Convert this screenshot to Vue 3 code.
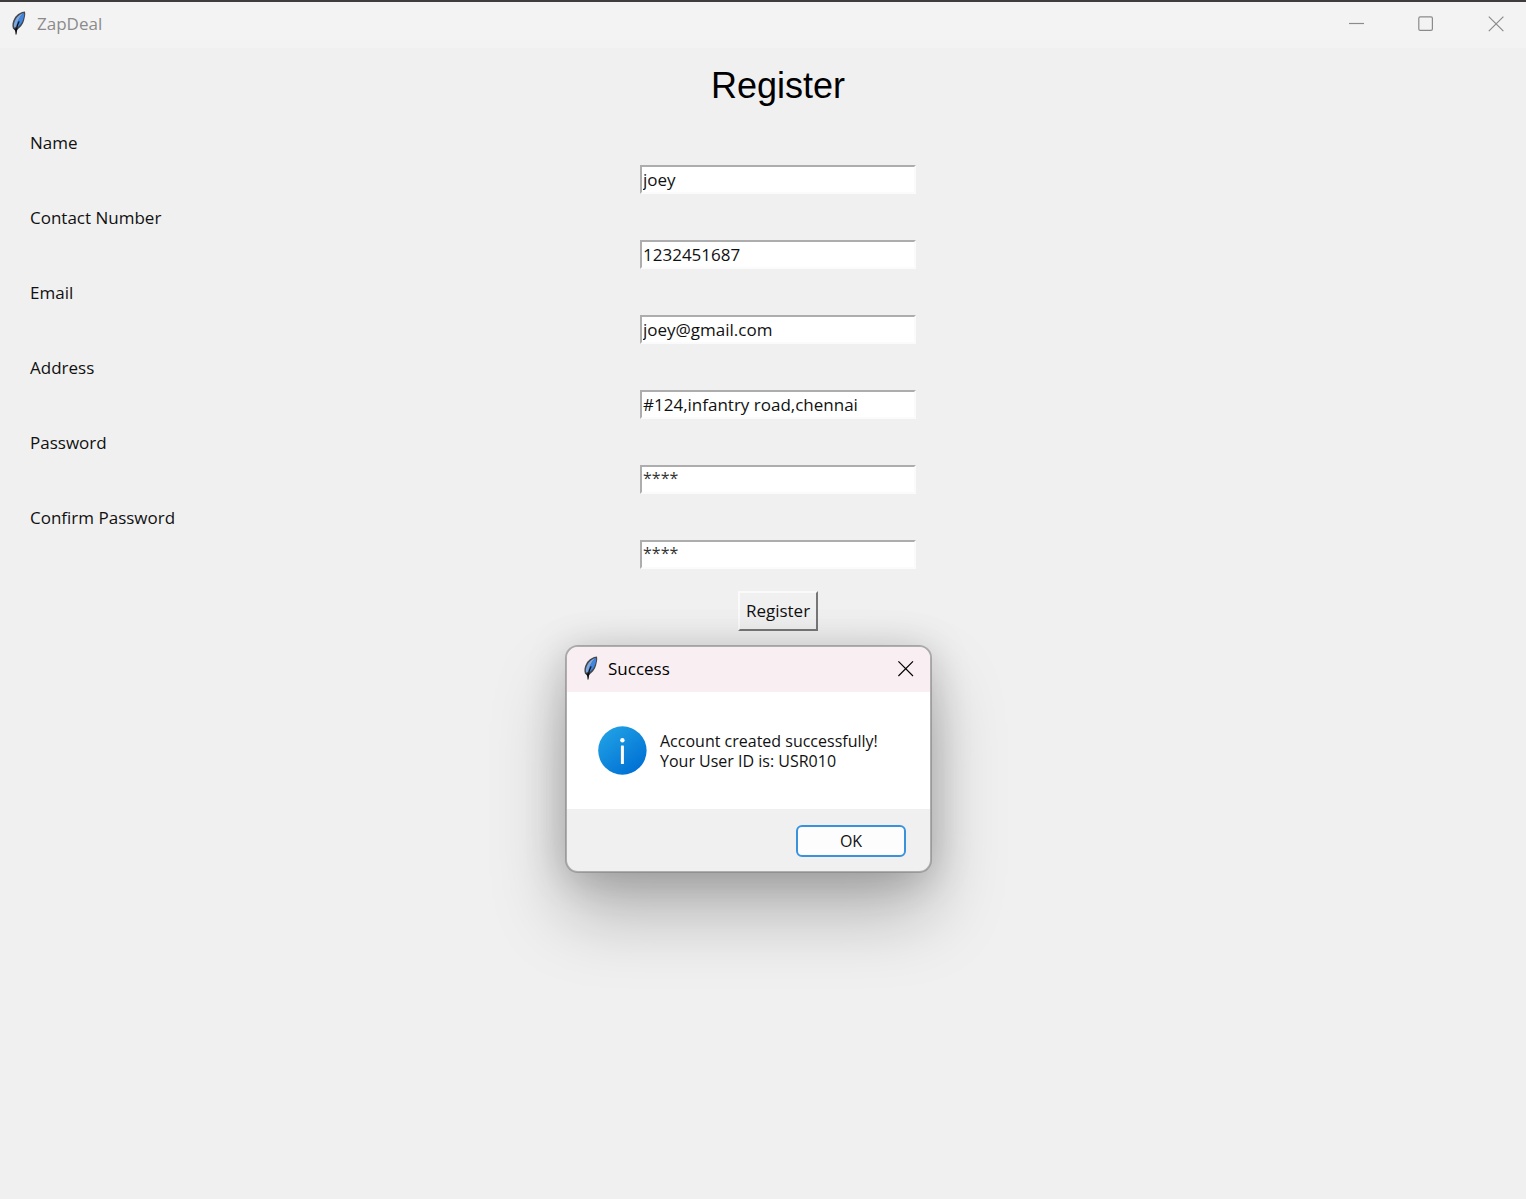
<script setup>
import { reactive, ref } from 'vue'

const fields = reactive([
  { id: 'name', label: 'Name', value: 'joey' },
  { id: 'contact', label: 'Contact Number', value: '1232451687' },
  { id: 'email', label: 'Email', value: 'joey@gmail.com' },
  { id: 'address', label: 'Address', value: '#124,infantry road,chennai' },
  { id: 'password', label: 'Password', value: '****', masked: true },
  { id: 'confirm', label: 'Confirm Password', value: '****', masked: true },
])
const dialogOpen = ref(true)
</script>

<template>
  <div class="window">
    <!-- Feather shared by both title bars -->
    <svg class="defs" width="0" height="0" aria-hidden="true">
      <symbol id="feather" viewBox="0 0 16 24">
        <path d="M15 .6C11 .8 7 3.4 4.6 7C2.4 10.4 1.8 14.4 3 17.8L5.8 19.8C10 17.2 13 13.4 14 9.8C14.6 7 15.8 4 15 .6Z" fill="#44474e" />
        <path d="M13.4 2C10.2 2.8 7.2 5.4 5.6 8.6C4 11.6 3.4 14.4 4.2 16.8L6.4 15.4C7 11 9.4 6.4 13.4 2Z" fill="#7fa9de" />
        <path d="M14 1.8C10.4 4.6 6.8 10.6 6 17.2C9.8 14.8 12.2 12 13 8.8C13.6 6.6 14.6 4.6 14 1.8Z" fill="#3f86e0" />
        <path d="M9.2 10.4C7.4 13.4 6.2 17 6 23.4" fill="none" stroke="#0c0e12" stroke-width="1.1" />
        <path d="M4.2 17.6L6 22.4L7.8 17.4Z" fill="#0c0e12" />
      </symbol>
    </svg>

    <header class="titlebar">
      <svg class="feather" aria-hidden="true"><use href="#feather" /></svg>
      <span class="caption">ZapDeal</span>
      <div class="controls">
        <button type="button" aria-label="Minimize">
          <svg width="16" height="16" viewBox="0 0 16 16"><path d="M1 7.5H16" /></svg>
        </button>
        <button type="button" aria-label="Maximize">
          <svg width="16" height="16" viewBox="0 0 16 16"><rect x=".8" y=".8" width="13.6" height="13.6" rx="1.4" /></svg>
        </button>
        <button type="button" aria-label="Close">
          <svg width="16" height="16" viewBox="0 0 16 16"><path d="M.8 .6L15.4 15.2M15.4 .6L.8 15.2" /></svg>
        </button>
      </div>
    </header>

    <main>
      <form class="form" @submit.prevent="dialogOpen = true">
        <h1>Register</h1>
        <div v-for="field in fields" :key="field.id" class="field">
          <label :for="field.id">{{ field.label }}</label>
          <input
            :id="field.id"
            v-model="field.value"
            :class="{ masked: field.masked }"
            type="text"
            autocomplete="off"
            spellcheck="false"
          />
        </div>
        <button class="submit" type="submit">Register</button>
      </form>
    </main>

    <section v-if="dialogOpen" class="dialog" role="dialog" aria-labelledby="dialog-title">
      <header class="dialog-bar">
        <svg class="feather" aria-hidden="true"><use href="#feather" /></svg>
        <h2 id="dialog-title">Success</h2>
        <button class="dialog-close" type="button" aria-label="Close" @click="dialogOpen = false">
          <svg width="16" height="16" viewBox="0 0 16 16"><path d="M.4 .4L15 15M15 .4L.4 15" /></svg>
        </button>
      </header>
      <div class="dialog-body">
        <svg width="50" height="50" viewBox="0 0 50 50" aria-hidden="true">
          <defs>
            <linearGradient id="info" x1="0.15" y1="0.1" x2="0.8" y2="0.95">
              <stop offset="0" stop-color="#1f9fe4" />
              <stop offset="1" stop-color="#0070d4" />
            </linearGradient>
          </defs>
          <circle cx="25.4" cy="24.5" r="24.2" fill="url(#info)" />
          <circle cx="25.4" cy="14.2" r="2.2" fill="#fff" />
          <rect x="23.9" y="19.4" width="3" height="18.6" rx=".6" fill="#fff" />
        </svg>
        <p>Account created successfully!<br />Your User ID is: USR010</p>
      </div>
      <footer class="dialog-footer">
        <button class="ok" type="button" @click="dialogOpen = false">OK</button>
      </footer>
    </section>
  </div>
</template>

<style>
body {
  background: #f0f0f0;
}
</style>

<style scoped>
.window {
  position: relative;
  box-sizing: border-box;
  min-height: 100vh;
  border-top: 2px solid #3f3c3e;
  background: #f0f0f0;
  color: #111;
  font-family: "Open Sans", "Noto Sans", sans-serif;
  font-size: 17px;
  line-height: 20px;
}

.defs {
  position: absolute;
}

button,
input {
  box-sizing: border-box;
  margin: 0;
  color: inherit;
  font: inherit;
}

.titlebar {
  display: flex;
  align-items: center;
  height: 46px;
  padding-left: 10px;
  background: #f3f3f3;
  color: #8b8b8b;
}

.feather {
  width: 16px;
  height: 24px;
  margin-bottom: 4px;
}

.caption {
  margin-left: 11px;
  padding-bottom: 2px;
}

.controls {
  display: flex;
  align-self: stretch;
  margin-left: auto;
  padding: 0 22px 2px 0;
  gap: 54px;
}

.controls button {
  display: flex;
  align-items: center;
  width: 16px;
  padding: 0;
  border: 0;
  background: none;
}

.controls svg,
.dialog-close svg {
  flex: none;
  fill: none;
  stroke: currentColor;
  stroke-width: 1.2;
}

.form {
  display: flex;
  flex-direction: column;
  align-items: center;
  padding-left: 30px;
}

h1 {
  margin: 0;
  color: #000;
  font-family: "Liberation Sans", Arial, sans-serif;
  font-size: 36px;
  font-weight: 400;
  line-height: 76px;
}

.field {
  display: flex;
  flex-direction: column;
  align-items: center;
  width: 100%;
  height: 75px;
}

.field label {
  align-self: flex-start;
  line-height: 37px;
  margin-bottom: 4px;
}

.field input {
  width: 276px;
  height: 29px;
  padding: 0 1px;
  border: 2px solid #fbfbfb;
  border-top-color: #adadad;
  border-left-color: #adadad;
  border-radius: 0;
  outline: 0;
  background: #fff;
}

.field .masked {
  padding-bottom: 3px;
  color: #333;
  font-size: 16px;
}

.submit {
  width: 80px;
  height: 40px;
  margin-top: 17px;
  padding: 0;
  border: 2px solid #fafafa;
  border-right-color: #777;
  border-bottom-color: #777;
  background: #f0f0f0;
}

.dialog {
  position: absolute;
  top: 643px;
  left: 565px;
  box-sizing: border-box;
  width: 367px;
  border: 2px solid rgba(130, 130, 130, 0.6);
  border-radius: 13px;
  background: #f0f0f0;
  background-clip: padding-box;
  box-shadow: 0 40px 72px rgba(0, 0, 0, 0.26), 0 4px 40px rgba(0, 0, 0, 0.18);
}

.dialog-bar {
  display: flex;
  align-items: center;
  box-sizing: border-box;
  height: 45px;
  padding: 0 16px 2px 15px;
  border-radius: 11px 11px 0 0;
  background: #f9eff3;
  color: #000;
}

.dialog-bar .feather {
  margin-bottom: 2px;
}

h2 {
  margin: 0 auto 0 10px;
  font-size: 17px;
  font-weight: 400;
}

.dialog-close {
  display: flex;
  padding: 0;
  border: 0;
  background: none;
}

.dialog-body {
  display: flex;
  align-items: center;
  gap: 13px;
  height: 117px;
  padding-left: 30px;
  background: #fff;
  font-size: 16px;
}

.dialog-body p {
  margin: 0;
  white-space: nowrap;
}

.dialog-footer {
  display: flex;
  align-items: center;
  justify-content: flex-end;
  box-sizing: border-box;
  height: 62px;
  padding: 2px 24px 0 0;
  font-size: 16px;
}

.ok {
  width: 110px;
  height: 32px;
  padding: 0;
  border: 2px solid #3a92dc;
  border-radius: 6px;
  background: #fdfdfd;
}
</style>
